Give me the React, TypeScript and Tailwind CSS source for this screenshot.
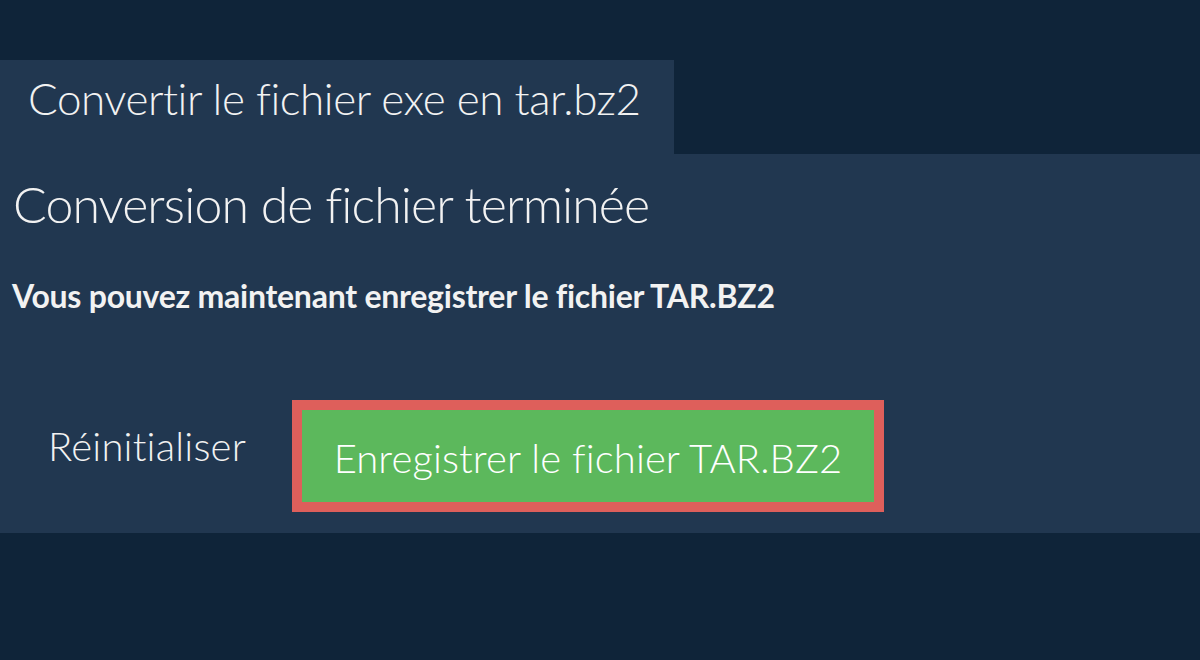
export default function App() {
  return (
    <div className="min-h-[660px] bg-[#0f2439] pt-[60px] font-['Lato',sans-serif] text-[#f2f2f2]">
      <div className="h-[94px] w-[674px] bg-[#213750] pl-[28px] pt-[12px]">
        <h2 className="text-[44px] font-light leading-[1.2] tracking-[-0.45px]">Convertir le fichier exe en tar.bz2</h2>
      </div>
      <section className="h-[379px] bg-[#213750] pl-[13px] pt-[20px]">
        <h1 className="text-[50px] font-light leading-[1.2] tracking-[-0.9px]">Conversion de fichier terminée</h1>
        <p className="-ml-[1px] mt-[43px] text-[32px] font-bold leading-[1.2] tracking-[-0.25px]">
          Vous pouvez maintenant enregistrer le fichier TAR.BZ2
        </p>
        <div className="mt-[85px] flex items-start">
          <button type="button" className="ml-[35px] mt-[22px] text-[40px] font-light leading-[1.2] tracking-[0.2px]">
            Réinitialiser
          </button>
          <button
            type="button"
            className="ml-[46px] flex h-[112px] w-[592px] items-center justify-center border-[10px] border-[#de5f5b] bg-[#5cb85c] pt-[4px] text-[40px] font-light leading-[1.2] tracking-[0.1px] text-white"
          >
            Enregistrer le fichier TAR.BZ2
          </button>
        </div>
      </section>
    </div>
  );
}
